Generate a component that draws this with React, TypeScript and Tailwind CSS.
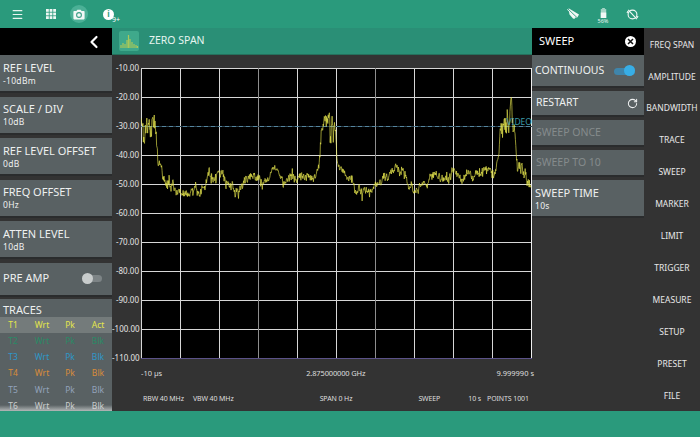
import React from 'react';
import { ChevronLeft, RotateCw, Menu } from 'lucide-react';

const YLABELS = ['-10.00', '-20.00', '-30.00', '-40.00', '-50.00', '-60.00', '-70.00', '-80.00', '-90.00', '-100.00', '-110.00'];
const MENU = ['FREQ SPAN', 'AMPLITUDE', 'BANDWIDTH', 'TRACE', 'SWEEP', 'MARKER', 'LIMIT', 'TRIGGER', 'MEASURE', 'SETUP', 'PRESET', 'FILE'];

const TRACES = [
  { name: 'T1', mode: 'Act', color: 'text-[#e4e64c]', row: 'bg-[#747b7b]' },
  { name: 'T2', mode: 'Blk', color: 'text-[#2a8a66]', row: '' },
  { name: 'T3', mode: 'Blk', color: 'text-[#2e97c9]', row: '' },
  { name: 'T4', mode: 'Blk', color: 'text-[#d98c3a]', row: '' },
  { name: 'T5', mode: 'Blk', color: 'text-[#93a3bb]', row: '' },
  { name: 'T6', mode: 'Blk', color: 'text-[#c8cccc]', row: '' },
];

// rough envelope of the trace, in page pixels
const ENVELOPE: [number, number, number][] = [
  [141, 135, 16], [145, 125, 9], [150, 128, 10], [156, 126, 9], [157, 145, 5], [158, 165, 5], [161, 165, 5],
  [164, 180, 6], [170, 183, 6], [180, 190, 4], [197, 190, 4], [204, 186, 4], [210, 175, 5], [220, 172, 5],
  [227, 185, 6], [240, 190, 4], [246, 184, 4], [250, 173, 4], [260, 183, 4], [268, 181, 3], [272, 169, 1],
  [278, 169, 1], [283, 183, 3], [290, 176, 4], [305, 176, 5], [315, 178, 4], [319, 165, 2], [321, 140, 6],
  [324, 123, 6], [330, 128, 11], [335, 126, 8], [337, 165, 3], [342, 172, 3], [350, 176, 4], [360, 190, 4],
  [373, 190, 4], [380, 178, 4], [393, 171, 4], [403, 174, 4], [410, 183, 4], [417, 192, 3], [427, 183, 4],
  [437, 172, 4], [447, 176, 4], [453, 171, 4], [462, 181, 4], [473, 175, 4], [488, 169, 4], [494, 178, 5],
  [498, 157, 3], [502, 125, 8], [507, 128, 12], [511, 108, 8], [515, 130, 10], [517, 167, 5], [523, 172, 6],
  [530, 188, 6],
];

function buildTrace() {
  let seed = 7;
  const rnd = () => {
    seed = (seed * 16807) % 2147483647;
    return seed / 2147483647 - 0.5;
  };
  const pts: string[] = [];
  let seg = 0;
  let slow = 0;
  for (let x = 141; x <= 531; x += 0.39) {
    while (seg < ENVELOPE.length - 2 && ENVELOPE[seg + 1][0] < x) seg++;
    const [x0, y0, n0] = ENVELOPE[seg];
    const [x1, y1, n1] = ENVELOPE[seg + 1];
    const t = Math.min(1, (x - x0) / (x1 - x0));
    const n = n0 + (n1 - n0) * t;
    slow = slow * 0.8 + rnd() * 0.9;
    const spike = rnd() > 0.46 ? rnd() * 10 : 0;
    const y = y0 + (y1 - y0) * t + n * (1.6 * rnd() + 1.6 * slow) + spike;
    pts.push(`${(x - 141).toFixed(2)},${(y - 68).toFixed(2)}`);
  }
  return pts.join(' ');
}

const TRACE_POINTS = buildTrace();

function Card({ title, value }: { title: string; value: string }) {
  return (
    <div className="flex h-[38px] shrink-0 flex-col justify-center border-b-2 border-[#2a2c2d] bg-[#596163] pl-[3px] text-[#eef0f0]">
      <div className="text-[11px] leading-[15px]">{title}</div>
      <div className="text-[8.5px] leading-[12px] tracking-[0.3px]">{value}</div>
    </div>
  );
}

function SweepIcon() {
  return (
    <svg width="20" height="20" viewBox="0 0 20 20" className="shrink-0 rounded-[2px] bg-[#3fa98b]">
      <path d="M2 17V14M4 17V12M6 17V13M8 17V9M9.5 17V4M11 17V8M13 17V11M15 17V13M17 17V14M18.5 17V15" stroke="#a9c85a" strokeWidth="1.2" />
    </svg>
  );
}

function Chart() {
  const h = [0, 1, 3, 4, 5, 6, 7, 8, 9];
  const v = [1, 2, 3, 4, 5, 6, 7, 8, 9];
  return (
    <div className="relative h-[291px] w-[391px] shrink-0 bg-black">
      <svg width="391" height="291" viewBox="0 0 391 291" className="block">
        <g shapeRendering="crispEdges" strokeWidth="1">
          {h.map((i) => (
            <line key={i} x1="0" x2="391" y1={i * 29 + 0.5} y2={i * 29 + 0.5} stroke="#d6d6d6" />
          ))}
          {v.map((i) => (
            <line key={i} x1={i * 39 + 0.5} x2={i * 39 + 0.5} y1="0" y2="291" stroke={i === 3 || i === 6 ? '#8e8e8e' : '#d6d6d6'} />
          ))}
          <line x1="0.5" x2="0.5" y1="0" y2="291" stroke="#d6d6d6" />
          <line x1="390.5" x2="390.5" y1="0" y2="291" stroke="#eeeeee" />
          <line x1="0" x2="391" y1="290.5" y2="290.5" stroke="#5b5288" />
          <line x1="0" x2="391" y1="58.5" y2="58.5" stroke="#2c4350" />
          <line x1="0" x2="391" y1="58.5" y2="58.5" stroke="#55859f" strokeDasharray="4 3" />
        </g>
        <polyline points={TRACE_POINTS} fill="none" stroke="#e4e44e" strokeWidth="0.65" />
      </svg>
      <span className="absolute right-0 top-[48px] text-[8.5px] leading-[12px] text-[#3c9aa8]">VIDEO</span>
    </div>
  );
}

export default function App() {
  return (
    <div className="flex h-[437px] w-[700px] flex-col overflow-hidden bg-[#333333] font-['Noto_Sans',sans-serif] text-white">
      {/* top bar */}
      <div className="flex h-[28px] shrink-0 items-center bg-[#2a9a7c]">
        <Menu className="ml-[11px] h-[13px] w-[13px]" strokeWidth={2.2} color="#e8f4f0" />
        <svg width="10" height="10" viewBox="0 0 10 10" className="ml-[22px]" fill="#eef7f4">
          {[0, 3.6, 7.2].map((y) => [0, 3.6, 7.2].map((x) => <rect key={`${x}-${y}`} x={x} y={y} width="2.8" height="2.8" />))}
        </svg>
        <div className="ml-[14px] flex h-[18px] w-[18px] items-center justify-center rounded-full bg-[#4bb096]">
          <svg width="12" height="11" viewBox="0 0 12 11">
            <path d="M1.2 2H3.4L4.4.7H7.6L8.6 2H10.8Q11.6 2 11.6 2.8V9.6Q11.6 10.4 10.8 10.4H1.2Q.4 10.4 .4 9.6V2.8Q.4 2 1.2 2Z" fill="#f2f8f6" />
            <circle cx="6" cy="6" r="2.4" fill="none" stroke="#3a9f86" strokeWidth="1.1" />
          </svg>
        </div>
        <div className="relative ml-[15px] flex h-[11px] w-[11px] items-center justify-center rounded-full bg-white">
          <span className="text-[8px] font-bold leading-none text-[#2a9a7c]">i</span>
          <span className="absolute left-[9px] top-[7px] text-[7px] leading-[8px] text-white">9+</span>
        </div>
        <div className="ml-auto flex items-center">
          <svg width="16" height="12" viewBox="0 0 14 12" fill="#f0f8f5">
            <path d="M1 1.5 3 .5 13 6.5 11 10 9 9.5 8.5 11 7 10.5 3.5 6.5 3 3.5Z" />
            <path d="M1.5 .5 12.5 11" stroke="#2a9a7c" strokeWidth="0.9" />
          </svg>
          <div className="ml-[15px] flex w-[14px] flex-col items-center pt-[5px]">
            <svg width="7" height="10" viewBox="0 0 7 11">
              <rect x="2" y="0" width="3" height="1.2" fill="#a8d6c8" />
              <rect x="0.5" y="1.2" width="6" height="9.8" fill="#a8d6c8" />
              <rect x="0.5" y="5" width="6" height="6" fill="#f2f8f6" />
            </svg>
            <span className="text-[5.5px] leading-[7px] text-[#e6f3ef]">56%</span>
          </div>
          <svg width="13" height="13" viewBox="0 0 13 13" className="ml-[16px] mr-[61px]" fill="none" stroke="#f0f8f5" strokeWidth="1.1">
            <circle cx="6.5" cy="6.5" r="4.4" />
            <path d="M2.2 1.8 10.8 11.2M1 5 2 3M12 8 11 10" />
          </svg>
        </div>
      </div>

      <div className="flex h-[383px] shrink-0">
        {/* left panel */}
        <div className="flex w-[112px] shrink-0 flex-col">
          <div className="flex h-[27px] shrink-0 items-center justify-end bg-black pr-[8px]">
            <ChevronLeft className="h-[20px] w-[20px]" strokeWidth={2.6} color="#ffffff" />
          </div>
          <div className="flex flex-col gap-[3.5px]">
            <Card title="REF LEVEL" value="-10dBm" />
            <Card title="SCALE / DIV" value="10dB" />
            <Card title="REF LEVEL OFFSET" value="0dB" />
            <Card title="FREQ OFFSET" value="0Hz" />
            <Card title="ATTEN LEVEL" value="10dB" />
            <div className="flex h-[34px] shrink-0 items-center justify-between border-b-2 border-[#2a2c2d] bg-[#596163] pl-[3px] pr-[10px] text-[11px] text-[#eef0f0]">
              PRE AMP
              <div className="relative h-[7px] w-[19px] rounded-full bg-[#7d8486]">
                <div className="absolute left-[-1px] top-[-2.5px] h-[11px] w-[11px] rounded-full bg-[#c8cccc]" />
              </div>
            </div>
          </div>
          <div className="mt-[2px] flex min-h-0 flex-1 flex-col overflow-hidden bg-[#596163]">
            <div className="h-[18px] shrink-0 pl-[3px] text-[11px] leading-[21px] text-[#eef0f0]">TRACES</div>
            <div className="relative flex-1 text-[8.5px] leading-[16.3px]">
              {TRACES.map((t) => (
                <div key={t.name} className={`grid h-[16.3px] grid-cols-4 text-center ${t.color} ${t.row}`}>
                  <span className="-ml-[2px]">{t.name}</span>
                  <span>Wrt</span>
                  <span>Pk</span>
                  <span>{t.mode}</span>
                </div>
              ))}
              <div className="absolute bottom-0 left-0 h-[9px] w-full bg-gradient-to-b from-transparent to-[#e0e2e2]" />
            </div>
          </div>
        </div>

        {/* centre */}
        <div className="flex w-[420px] shrink-0 flex-col">
          <div className="flex h-[27px] shrink-0 items-center gap-[10px] border-b border-[#25705c] bg-[#2a8f76] pl-[7px] text-[10.5px] text-[#e6f5f0]">
            <SweepIcon />
            ZERO SPAN
          </div>
          <div className="flex h-[304px] shrink-0">
            <div className="w-[29px] shrink-0 pr-[2px] pt-[7px] text-right text-[8px] text-[#e4e4e4]">
              {YLABELS.map((l) => (
                <div key={l} className="h-[29px] leading-[12px]">{l}</div>
              ))}
            </div>
            <div className="mt-[13px]">
              <Chart />
            </div>
          </div>
          <div className="flex whitespace-nowrap pl-[29px] pt-[8px] text-[7.5px] leading-[12px] text-[#dedede]">
            <span>-10 µs</span>
            <span className="ml-[144px] tracking-[-0.15px]">2.875000000 GHz</span>
            <span className="ml-auto translate-x-[2px]">9.999990 s</span>
          </div>
          <div className="flex whitespace-nowrap pl-[31px] pt-[14px] text-[7px] leading-[12px] tracking-[-0.1px] text-[#dedede]">
            <span>RBW 40 MHz</span>
            <span className="ml-[9px]">VBW 40 MHz</span>
            <span className="ml-[86px]">SPAN 0 Hz</span>
            <span className="ml-[66px]">SWEEP</span>
            <span className="ml-[28px]">10 s</span>
            <span className="ml-[6px]">POINTS 1001</span>
          </div>
        </div>

        {/* sweep panel */}
        <div className="flex w-[112px] shrink-0 flex-col">
          <div className="flex h-[27px] shrink-0 items-center justify-between bg-black pl-[7px] pr-[8px] text-[11px]">
            SWEEP
            <div className="flex h-[11px] w-[11px] items-center justify-center rounded-full bg-white">
              <svg width="7" height="7" viewBox="0 0 7 7" stroke="#111111" strokeWidth="1.5">
                <path d="M1 1 6 6M6 1 1 6" />
              </svg>
            </div>
          </div>
          <div className="flex h-[33px] shrink-0 items-center justify-between border-b-2 border-[#2a2c2d] bg-[#596163] pl-[3px] pr-[9px] pt-[1px] text-[10.5px] text-[#eef0f0]">
            CONTINUOUS
            <div className="relative h-[7px] w-[21px] rounded-full bg-[#3f85ab]">
              <div className="absolute right-0 top-[-2.5px] h-[11px] w-[11px] rounded-full bg-[#38aee6]" />
            </div>
          </div>
          <div className="mt-[3px] flex h-[26px] shrink-0 items-center justify-between border-b-2 border-[#2a2c2d] bg-[#596163] pl-[4px] pr-[6px] text-[10.5px] text-[#eef0f0]">
            RESTART
            <RotateCw className="h-[11px] w-[11px]" strokeWidth={2.2} />
          </div>
          <div className="mt-[3px] flex h-[27px] shrink-0 items-center border-b-2 border-[#2a2c2d] bg-[#596163] pl-[4px] text-[10.5px] text-[#858b8c]">
            SWEEP ONCE
          </div>
          <div className="mt-[3px] flex h-[27px] shrink-0 items-center border-b-2 border-[#2a2c2d] bg-[#596163] pl-[4px] text-[10.5px] text-[#858b8c]">
            SWEEP TO 10
          </div>
          <div className="mt-[3px]">
            <Card title="SWEEP TIME" value="10s" />
          </div>
        </div>

        {/* right menu */}
        <div className="flex flex-1 flex-col pt-[1px]">
          {MENU.map((m) => (
            <div key={m} className="flex h-[31.95px] shrink-0 items-center justify-center text-[8.5px] text-[#e8e8e8]">
              {m}
            </div>
          ))}
        </div>
      </div>

      <div className="flex-1 bg-[#2a9a7c]" />
    </div>
  );
}
